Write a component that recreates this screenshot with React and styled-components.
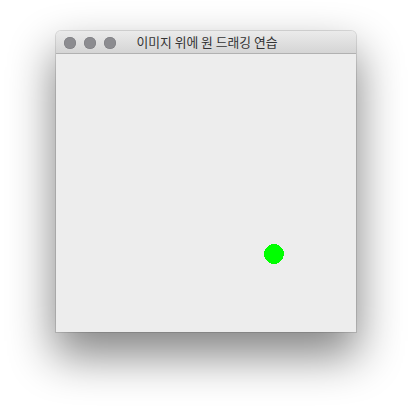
import React from 'react';
import styled, { createGlobalStyle } from 'styled-components';

const GlobalStyle = createGlobalStyle`
  html, body {
    margin: 0;
    padding: 0;
    background: #ffffff;
  }
`;

const Stage = styled.div`
  width: 412px;
  height: 412px;
  padding: 31px 0 0 56px;
  box-sizing: border-box;
`;

const Window = styled.div`
  width: 300px;
  height: 301px;
  display: flex;
  flex-direction: column;
  border-radius: 5px 5px 0 0;
  background: #ededed;
  box-shadow: 0 22px 45px 2px rgba(0, 0, 0, 0.48), 0 0 0 1px rgba(0, 0, 0, 0.12);
  overflow: hidden;
`;

const TitleBar = styled.div`
  position: relative;
  height: 22px;
  flex: none;
  display: flex;
  align-items: center;
  justify-content: center;
  background: linear-gradient(#ebebeb, #d5d5d5);
  border-bottom: 1px solid #b1b1b1;
`;

const Lights = styled.div`
  position: absolute;
  left: 8px;
  top: 6px;
  display: flex;
  gap: 8px;
`;

const Light = styled.span`
  width: 12px;
  height: 12px;
  border-radius: 50%;
  background: #8c8c90;
  box-shadow: inset 0 0 0 0.5px #7a7a7e;
`;

const Title = styled.span`
  font-family: "Noto Sans CJK KR", "Noto Sans", sans-serif;
  font-size: 12.8px;
  color: #333333;
  line-height: 1;
  padding-left: 2px;
`;

const Canvas = styled.div`
  position: relative;
  flex: 1;
  background: #ededed;
`;

const Dot = styled.svg`
  position: absolute;
  left: ${(p) => p.x - 10}px;
  top: ${(p) => p.y - 10}px;
`;

export default function App() {
  return (
    <>
      <GlobalStyle />
      <Stage>
        <Window>
          <TitleBar>
            <Lights>
              <Light />
              <Light />
              <Light />
            </Lights>
            <Title>이미지 위에 원 드래깅 연습</Title>
          </TitleBar>
          <Canvas>
            <Dot x={218} y={200} width="20" height="20" shapeRendering="crispEdges">
              <circle cx="10" cy="10" r="10" fill="#00ff00" />
              <rect x="0" y="10" width="1" height="1" fill="#00ff00" />
            </Dot>
          </Canvas>
        </Window>
      </Stage>
    </>
  );
}
